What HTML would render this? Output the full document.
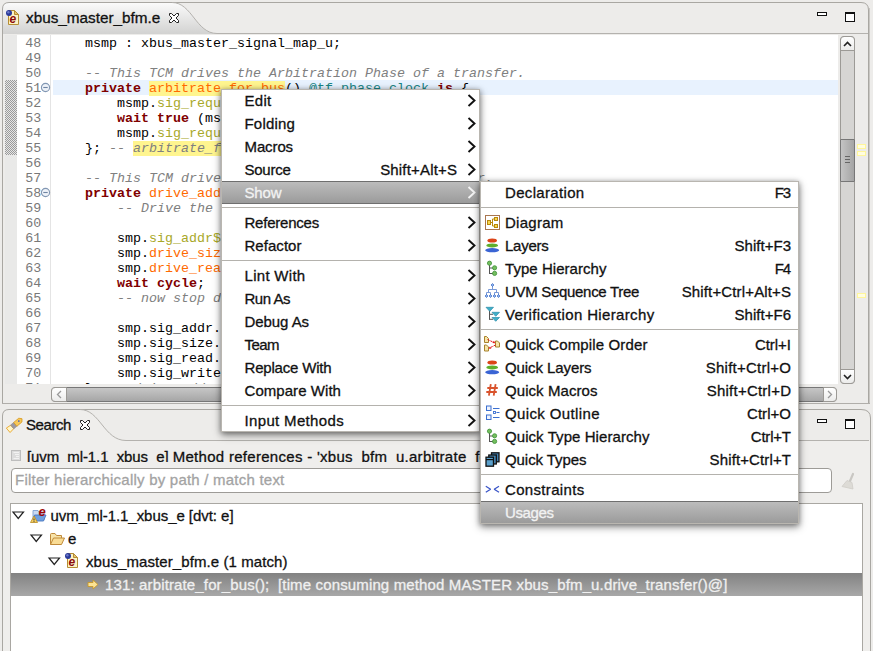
<!DOCTYPE html>
<html>
<head>
<meta charset="utf-8">
<style>
*{box-sizing:border-box;margin:0;padding:0}
html,body{width:873px;height:651px;overflow:hidden;background:#edecea;font-family:"Liberation Sans",sans-serif;}
.abs{position:absolute}
#root{position:relative;width:873px;height:651px;overflow:hidden;background:#edecea}
svg{position:absolute;overflow:visible}
/* editor */
#code{position:absolute;left:17px;top:35px;width:821px;height:349px;background:#fff;overflow:hidden}
.ln{position:absolute;left:36px;height:15px;margin-top:1px;font:13.33px/15px "Liberation Mono",monospace;white-space:pre;color:#000}
.num{position:absolute;left:8.300px;height:15px;margin-top:1px;font:13.33px/15px "Liberation Mono",monospace;color:#787878}
.kw{color:#7f0000;font-weight:bold}
.cm{color:#808080;font-style:italic}
.or{color:#ff6a00}
.ol{color:#a8a828}
.tl{color:#1a8585}
.hl{background:#fff58f}
/* menus */
.menu{position:absolute;background:#fff;border:1px solid #b9b6b0;box-shadow:0 3px 8px 0 rgba(0,0,0,.42),0 1px 5px rgba(0,0,0,.3);overflow:hidden}
.mi{position:absolute;left:0;right:0;height:23px;font-size:15px;line-height:23px;color:#111;white-space:nowrap;-webkit-text-stroke:0.3px}
#m1 .t{position:absolute;left:22.5px;top:0}
#m1 .k{position:absolute;right:22px;top:0}
#m2 .t{position:absolute;left:24px;top:0}
#m2 .k{position:absolute;right:7px;top:0}
.mi svg.a{right:3px;top:5px}
.mi svg.ic{left:4px;top:4px}
.sep{position:absolute;left:0;right:0;height:1px;background:#b4b2ad}
.sel{background:linear-gradient(#bcbcbc,#9b9b9b);border-top:1px solid #6f6f6f;border-bottom:1px solid #6f6f6f;color:#f2f2f2;line-height:21px}
.sel svg.a{margin-top:-1px}
.ui{position:absolute;font-size:15px;line-height:18px;color:#111;white-space:nowrap;-webkit-text-stroke:0.3px}
</style>
</head>
<body>
<div id="root">
<!-- EDITOR PANEL -->
<svg width="873" height="40" style="left:0;top:0">
<defs><linearGradient id="tg" x1="0" y1="0" x2="0" y2="1"><stop offset="0" stop-color="#fbfbfb"/><stop offset="1" stop-color="#d2d2d1"/></linearGradient></defs>
<path d="M2.5,35 L2.5,9 Q2.5,2.5 9,2.5 L172,2.5 C192,2.5 196,33.5 217,33.5 L868.5,33.5 L868.5,35 Z" fill="#edecea"/>
<path d="M2.5,34 L2.5,9 Q2.5,2.5 9,2.5 L172,2.5 C192,2.5 196,33.5 217,33.5 L217,34 Z" fill="url(#tg)"/>
<path d="M2.5,404 L2.5,9 Q2.5,2.5 9,2.5 L861,2.5 Q868.5,2.5 868.5,10 L868.5,404" fill="none" stroke="#a9a7a2" stroke-width="1"/>
<path d="M172,2.5 C192,2.5 196,33.5 217,33.5 L868,33.5" fill="none" stroke="#b4b2ae" stroke-width="1"/>
</svg>
<div class="abs" style="left:2px;top:403px;width:868px;height:1px;background:#b0aeaa"></div>
<div class="abs" style="left:869px;top:8px;width:1px;height:395px;background:#c9c7c3"></div>
<svg width="14" height="18" style="left:6px;top:9px" viewBox="0 0 14 18">
<path d="M2.5,1.5 L8.5,1.5 L12.5,5.5 L12.5,15.5 L2.5,15.5 Z" fill="#fdf3c4" stroke="#b58d35" stroke-width="1"/>
<path d="M8.5,1.5 L8.5,5.5 L12.5,5.5 Z" fill="#e8c36a" stroke="#b58d35" stroke-width="1"/>
<text x="3.6" y="14" font-family="Liberation Sans" font-weight="bold" font-style="italic" font-size="12" fill="#8b0a0a">e</text>
<circle cx="3" cy="4" r="3" fill="#2a3a9a"/><circle cx="2.4" cy="3.3" r="1.2" fill="#6a78c8"/>
</svg>
<div class="ui" style="left:26px;top:9px;font-size:15.3px">xbus_master_bfm.e</div>
<svg width="12" height="12" style="left:168px;top:12px" viewBox="0 0 12 12"><path d="M1.5,1.5 L3.5,1.5 L6,4 L8.5,1.5 L10.5,1.5 L10.5,3.5 L8,6 L10.5,8.5 L10.5,10.5 L8.5,10.5 L6,8 L3.5,10.5 L1.5,10.5 L1.5,8.5 L4,6 L1.5,3.5 Z" fill="#fff" stroke="#222" stroke-width="1"/></svg>
<div class="abs" style="left:817px;top:12px;width:10px;height:4px;border:1px solid #111;background:#fff"></div>
<div class="abs" style="left:845px;top:12px;width:10px;height:10px;border:1px solid #111;border-top-width:2px;background:#fff"></div>
<div class="abs" style="left:5px;top:35px;width:12px;height:349px;background:#e9e9e8"></div>
<div class="abs" style="left:5px;top:80px;width:12px;height:75px;background-color:#d8d8d8;background-image:repeating-conic-gradient(#9a9a9a 0% 25%, #e6e6e6 0% 50%);background-size:2px 2px"></div>
<div id="code">
<div class="abs" style="left:36px;top:45px;width:785px;height:15px;background:#e8f2fe"></div>
<div class="abs" style="left:33px;top:0;width:1px;height:349px;background:#e4e4e4"></div>
<div class="num" style="top:0px">48</div>
<div class="ln" style="top:0px">    msmp : xbus_master_signal_map_u;</div>
<div class="num" style="top:15px">49</div>
<div class="num" style="top:30px">50</div>
<div class="ln" style="top:30px">    <span class="cm">-- This TCM drives the Arbitration Phase of a transfer.</span></div>
<div class="num" style="top:45px">51</div>
<div class="ln" style="top:45px">    <span class="kw">private</span> <span class="or hl">arbitrate_for_bus</span>() <span class="tl">@tf_phase_clock</span> <span class="kw">is</span> {</div>
<div class="num" style="top:60px">52</div>
<div class="ln" style="top:60px">        msmp.<span class="ol">sig_request$</span> = 1;</div>
<div class="num" style="top:75px">53</div>
<div class="ln" style="top:75px">        <span class="kw">wait true</span> (msmp.sig_grant$ == 1);</div>
<div class="num" style="top:90px">54</div>
<div class="ln" style="top:90px">        msmp.<span class="ol">sig_request$</span> = 0;</div>
<div class="num" style="top:105px">55</div>
<div class="ln" style="top:105px">    }; <span class="cm">-- <span class="hl">arbitrate_for_bus</span>()</span></div>
<div class="num" style="top:120px">56</div>
<div class="num" style="top:135px">57</div>
<div class="ln" style="top:135px">    <span class="cm">-- This TCM drives the Address Phase of a transfer.</span></div>
<div class="num" style="top:150px">58</div>
<div class="ln" style="top:150px">    <span class="kw">private</span> <span class="or">drive_address_phase</span>(t : MASTER xbus_trans_s) @tf_phase_clock <span class="kw">is</span> {</div>
<div class="num" style="top:165px">59</div>
<div class="ln" style="top:165px">        <span class="cm">-- Drive the address phase</span></div>
<div class="num" style="top:180px">60</div>
<div class="num" style="top:195px">61</div>
<div class="ln" style="top:195px">        smp.<span class="ol">sig_addr$</span> = t.addr;</div>
<div class="num" style="top:210px">62</div>
<div class="ln" style="top:210px">        smp.<span class="or">drive_size</span>(t.size);</div>
<div class="num" style="top:225px">63</div>
<div class="ln" style="top:225px">        smp.<span class="or">drive_read_write</span>(t.read_write);</div>
<div class="num" style="top:240px">64</div>
<div class="ln" style="top:240px">        <span class="kw">wait cycle</span>;</div>
<div class="num" style="top:255px">65</div>
<div class="ln" style="top:255px">        <span class="cm">-- now stop driving</span></div>
<div class="num" style="top:270px">66</div>
<div class="num" style="top:285px">67</div>
<div class="ln" style="top:285px">        smp.sig_addr.put_mvl_list({MVL_Z});</div>
<div class="num" style="top:300px">68</div>
<div class="ln" style="top:300px">        smp.sig_size.put_mvl_list({MVL_Z});</div>
<div class="num" style="top:315px">69</div>
<div class="ln" style="top:315px">        smp.sig_read.put_mvl(MVL_Z);</div>
<div class="num" style="top:330px">70</div>
<div class="ln" style="top:330px">        smp.sig_write.put_mvl(MVL_Z);</div>
<div class="num" style="top:345px">71</div>
<div class="ln" style="top:345px">    }; <span class="cm">-- drive_address_phase()</span></div>
<svg width="9" height="9" style="left:24px;top:48px" viewBox="0 0 9 9"><circle cx="4.5" cy="4.5" r="4.100" fill="#eef2f8" stroke="#8297b3" stroke-width="1.100"/><path d="M2.300,4.5 H6.700" stroke="#6f85a3" stroke-width="1.100"/></svg>
<svg width="9" height="9" style="left:24px;top:153px" viewBox="0 0 9 9"><circle cx="4.5" cy="4.5" r="4.100" fill="#eef2f8" stroke="#8297b3" stroke-width="1.100"/><path d="M2.300,4.5 H6.700" stroke="#6f85a3" stroke-width="1.100"/></svg>
</div>
<div class="abs" style="left:840px;top:36px;width:15px;height:348px;background:#d6d5d3;border:1px solid #9c9a96;border-radius:4px"></div>
<div class="abs" style="left:840px;top:36px;width:15px;height:15px;background:linear-gradient(#fff,#ececeb);border:1px solid #9c9a96;border-radius:4px 4px 0 0"></div>
<svg width="9" height="6" style="left:843px;top:41px" viewBox="0 0 9 6"><path d="M1,5 L4.5,1.5 L8,5" fill="none" stroke="#222" stroke-width="1.6"/></svg>
<div class="abs" style="left:840px;top:369px;width:15px;height:15px;background:linear-gradient(#fff,#ececeb);border:1px solid #9c9a96;border-radius:0 0 4px 4px"></div>
<svg width="9" height="6" style="left:843px;top:374px" viewBox="0 0 9 6"><path d="M1,1 L4.5,4.5 L8,1" fill="none" stroke="#222" stroke-width="1.6"/></svg>
<div class="abs" style="left:840px;top:139px;width:15px;height:43px;background:linear-gradient(90deg,#c4c4c4,#a4a4a4);border:1px solid #777;border-radius:1px"></div>
<div class="abs" style="left:845px;top:156px;width:5px;height:1px;background:#666"></div>
<div class="abs" style="left:845px;top:159px;width:5px;height:1px;background:#666"></div>
<div class="abs" style="left:845px;top:162px;width:5px;height:1px;background:#666"></div>
<div class="abs" style="left:857px;top:144px;width:9px;height:5px;background:#fffde0;border:1px solid #fff69a"></div>
<div class="abs" style="left:857px;top:151px;width:9px;height:5px;background:#fffde0;border:1px solid #fff69a"></div>
<div class="abs" style="left:857px;top:293px;width:9px;height:5px;background:#fffde0;border:1px solid #fff69a"></div>
<div class="abs" style="left:51px;top:387px;width:786px;height:15px;background:#d6d5d3;border:1px solid #9c9a96;border-radius:4px"></div>
<div class="abs" style="left:66px;top:387px;width:758px;height:15px;background:linear-gradient(#c6c6c6,#a6a6a6);border:1px solid #777"></div>
<div class="abs" style="left:51px;top:387px;width:16px;height:15px;background:linear-gradient(#fff,#ececeb);border:1px solid #9c9a96;border-radius:4px 0 0 4px"></div>
<svg width="6" height="9" style="left:56px;top:390px" viewBox="0 0 6 9"><path d="M5,1 L1.5,4.5 L5,8" fill="none" stroke="#999" stroke-width="1.3"/></svg>
<div class="abs" style="left:823px;top:387px;width:14px;height:15px;background:linear-gradient(#fff,#ececeb);border:1px solid #9c9a96;border-radius:0 4px 4px 0"></div>
<svg width="6" height="9" style="left:827px;top:390px" viewBox="0 0 6 9"><path d="M1,1 L4.5,4.5 L1,8" fill="none" stroke="#999" stroke-width="1.3"/></svg>
<!-- SEARCH PANEL -->
<svg width="873" height="245" style="left:0;top:406px">
<path d="M2.5,245 L2.5,10 Q2.5,3.500 9,3.500 L80,3.500 C100,3.500 104,34.500 126,34.500 L870.500,34.500 L870.500,245 Z" fill="#efeeec"/>
<path d="M2.5,245 L2.5,10 Q2.5,3.500 9,3.500 L861,3.500 Q870.500,3.500 870.500,12 L870.500,245" fill="none" stroke="#a9a7a2" stroke-width="1"/>
<path d="M80,3.500 C100,3.500 104,34.500 126,34.500 L869,34.500" fill="none" stroke="#b4b2ae" stroke-width="1"/>
</svg>
<svg width="18" height="16" style="left:5px;top:417px" viewBox="0 0 18 16">
<g transform="translate(3.200,13.300) rotate(-40) scale(.88)">
<path d="M0,-3.300 L6,-2.600 L6,2.600 L0,3.300 Z" fill="#fff6c8" stroke="#e8a020" stroke-width=".9"/>
<rect x="6" y="-2.800" width="4.500" height="5.600" fill="#9b99a3" stroke="#85838d" stroke-width=".6"/>
<path d="M10.500,-2.800 H18 L20.500,0 L18,2.800 H10.500 Z" fill="#f6c85a" stroke="#d89a20" stroke-width=".9"/>
<circle cx="16" cy="-0.300" r=".9" fill="#3050c0"/>
</g>
</svg>
<div class="ui" style="left:26px;top:416px;letter-spacing:-0.421px">Search</div>
<svg width="12" height="12" style="left:79px;top:419px" viewBox="0 0 12 12"><path d="M1.5,1.5 L3.5,1.5 L6,4 L8.5,1.5 L10.5,1.5 L10.5,3.5 L8,6 L10.5,8.5 L10.5,10.5 L8.5,10.5 L6,8 L3.5,10.5 L1.5,10.5 L1.5,8.5 L4,6 L1.5,3.5 Z" fill="#fff" stroke="#222" stroke-width="1"/></svg>
<div class="abs" style="left:817px;top:419px;width:10px;height:4px;border:1px solid #111;background:#fff"></div>
<div class="abs" style="left:845px;top:419px;width:10px;height:10px;border:1px solid #111;border-top-width:2px;background:#fff"></div>
<svg width="10" height="11" style="left:11px;top:450px" viewBox="0 0 10 11"><rect x=".5" y=".5" width="9" height="10" fill="#dcdcdc" stroke="#bdbdbd"/><path d="M2.500,2.500 H8 M4,4.500 H8 M5,6.500 H8 M2.500,8.500 H8" stroke="#f2f2f2"/></svg>
<div class="ui" style="left:27px;top:447.5px;height:14.500px;width:780px;overflow:hidden;font-size:15px"><span style="letter-spacing:-0.1px">[uvm_ml-1.1_xbus_e]</span> <span style="letter-spacing:.29px">Method references - </span><span style="letter-spacing:.28px">&#39;xbus_bfm_u.arbitrate_for_bus&#39; - 1 match in working set</span></div>
<div class="abs" style="left:11px;top:468px;width:821px;height:25px;background:#fff;border:1px solid #9d9b97;border-radius:4px"></div>
<div class="ui" style="left:15px;top:471px;color:#a3a3a3;letter-spacing:0.224px">Filter hierarchically by path / match text</div>
<svg width="16" height="18" style="left:841px;top:473px" viewBox="0 0 16 18"><path d="M12,1 L9,8" stroke="#c9c7c3" stroke-width="2.2" stroke-linecap="round"/><path d="M6,7.500 L11,9.500 L12,16 L1,13.500 Z" fill="#dddbd6" stroke="#cfcdc8" stroke-width=".8"/></svg>
<div class="abs" style="left:10px;top:503px;width:853px;height:160px;background:#fff;border:1px solid #a9a7a2"></div>
<div class="abs" style="left:11px;top:573px;width:851px;height:23px;background:linear-gradient(#828282,#a8a8a8)"></div>
<svg width="13" height="9" style="left:12px;top:511px" viewBox="0 0 13 9"><path d="M1,1 H11.500 L6.250,7.500 Z" fill="#fff" stroke="#222" stroke-width="1.2" stroke-linejoin="miter"/></svg>
<svg width="13" height="9" style="left:30px;top:534px" viewBox="0 0 13 9"><path d="M1,1 H11.500 L6.250,7.500 Z" fill="#fff" stroke="#222" stroke-width="1.2" stroke-linejoin="miter"/></svg>
<svg width="13" height="9" style="left:48px;top:557px" viewBox="0 0 13 9"><path d="M1,1 H11.500 L6.250,7.500 Z" fill="#fff" stroke="#222" stroke-width="1.2" stroke-linejoin="miter"/></svg>
<svg width="18" height="18" style="left:30px;top:506px" viewBox="0 0 18 18">
<path d="M3,4.500 H8 L9,6 H14 V14 H3 Z" fill="#c9daf2" stroke="#7f9fd0" stroke-width=".9"/>
<path d="M4.500,9 H16 L13.500,15 H3 Z" fill="#6f9fe0" stroke="#4a78c0" stroke-width=".9"/>
<text x="8.5" y="9.500" font-family="Liberation Sans" font-weight="bold" font-style="italic" font-size="13" fill="#a00808">e</text>
<path d="M4,10 L7.500,16.500 H0.500 Z" fill="#f8d060" stroke="#b88a20" stroke-width=".8"/><path d="M4,12.500 V14.500" stroke="#333" stroke-width="1"/><rect x="3.500" y="15" width="1" height=".8" fill="#333"/>
</svg>
<div class="ui" style="left:50.5px;top:507px;letter-spacing:-0.048px">uvm_ml-1.1_xbus_e [dvt: e]</div>
<svg width="17" height="14" style="left:49px;top:532px" viewBox="0 0 17 14">
<path d="M1.500,12.500 V2.500 Q1.500,1.500 2.500,1.500 H6 L7.500,3.500 H12.500 V6" fill="#f7e3a8" stroke="#c08a3a" stroke-width="1"/>
<path d="M1.500,12.500 L4.500,6 H15.500 L12.500,12.500 Z" fill="#f9dc95" stroke="#c08a3a" stroke-width="1"/>
</svg>
<div class="ui" style="left:68px;top:530px">e</div>
<svg width="14" height="18" style="left:65px;top:552px" viewBox="0 0 14 18">
<path d="M2.5,1.5 L8.5,1.5 L12.5,5.5 L12.5,15.5 L2.5,15.5 Z" fill="#fdf3c4" stroke="#b58d35" stroke-width="1"/>
<path d="M8.5,1.5 L8.5,5.5 L12.5,5.5 Z" fill="#e8c36a" stroke="#b58d35" stroke-width="1"/>
<text x="3.6" y="14" font-family="Liberation Sans" font-weight="bold" font-style="italic" font-size="12" fill="#8b0a0a">e</text>
<circle cx="3" cy="4" r="3" fill="#2a3a9a"/><circle cx="2.4" cy="3.3" r="1.2" fill="#6a78c8"/>
</svg>
<div class="ui" style="left:86px;top:553px;letter-spacing:0.084px">xbus_master_bfm.e (1 match)</div>
<svg width="12" height="11" style="left:87px;top:579px" viewBox="0 0 12 11"><path d="M1,3.500 H6 V1 L11,5.500 L6,10 V7.500 H1 Z" fill="#fbe394" stroke="#c8982a" stroke-width=".9"/></svg>
<div class="ui" style="left:105px;top:576px;color:#f0f0f0;white-space:pre;letter-spacing:0.140px">131: arbitrate_for_bus();  [time consuming method MASTER xbus_bfm_u.drive_transfer()@]</div>
<div class="menu" id="m1" style="left:221px;top:89px;width:259px;height:343px">
<div class="mi" style="top:-1px"><span class="t" style="letter-spacing:0.288px">Edit</span><svg class="a" width="9" height="13" viewBox="0 0 9 13"><path d="M1.5,1 L7.5,6.5 L1.5,12" fill="none" stroke="#111" stroke-width="1.9"/></svg></div>
<div class="mi" style="top:22px"><span class="t" style="letter-spacing:0.186px">Folding</span><svg class="a" width="9" height="13" viewBox="0 0 9 13"><path d="M1.5,1 L7.5,6.5 L1.5,12" fill="none" stroke="#111" stroke-width="1.9"/></svg></div>
<div class="mi" style="top:45px"><span class="t" style="letter-spacing:-0.112px">Macros</span><svg class="a" width="9" height="13" viewBox="0 0 9 13"><path d="M1.5,1 L7.5,6.5 L1.5,12" fill="none" stroke="#111" stroke-width="1.9"/></svg></div>
<div class="mi" style="top:68px"><span class="t" style="letter-spacing:-0.254px">Source</span><span class="k" style="letter-spacing:0.178px;margin-right:-0.178px">Shift+Alt+S</span><svg class="a" width="9" height="13" viewBox="0 0 9 13"><path d="M1.5,1 L7.5,6.5 L1.5,12" fill="none" stroke="#111" stroke-width="1.9"/></svg></div>
<div class="mi sel" style="top:91px"><span class="t" style="letter-spacing:-0.130px">Show</span><svg class="a" width="9" height="13" viewBox="0 0 9 13"><path d="M1.5,1 L7.5,6.5 L1.5,12" fill="none" stroke="#f4f4f4" stroke-width="1.9"/></svg></div>
<div class="sep" style="top:117px"></div>
<div class="mi" style="top:121px"><span class="t" style="letter-spacing:-0.221px">References</span><svg class="a" width="9" height="13" viewBox="0 0 9 13"><path d="M1.5,1 L7.5,6.5 L1.5,12" fill="none" stroke="#111" stroke-width="1.9"/></svg></div>
<div class="mi" style="top:144px"><span class="t" style="letter-spacing:0.039px">Refactor</span><svg class="a" width="9" height="13" viewBox="0 0 9 13"><path d="M1.5,1 L7.5,6.5 L1.5,12" fill="none" stroke="#111" stroke-width="1.9"/></svg></div>
<div class="sep" style="top:170px"></div>
<div class="mi" style="top:174px"><span class="t" style="letter-spacing:0.294px">Lint With</span><svg class="a" width="9" height="13" viewBox="0 0 9 13"><path d="M1.5,1 L7.5,6.5 L1.5,12" fill="none" stroke="#111" stroke-width="1.9"/></svg></div>
<div class="mi" style="top:197px"><span class="t" style="letter-spacing:-0.477px">Run As</span><svg class="a" width="9" height="13" viewBox="0 0 9 13"><path d="M1.5,1 L7.5,6.5 L1.5,12" fill="none" stroke="#111" stroke-width="1.9"/></svg></div>
<div class="mi" style="top:220px"><span class="t" style="letter-spacing:-0.068px">Debug As</span><svg class="a" width="9" height="13" viewBox="0 0 9 13"><path d="M1.5,1 L7.5,6.5 L1.5,12" fill="none" stroke="#111" stroke-width="1.9"/></svg></div>
<div class="mi" style="top:243px"><span class="t" style="letter-spacing:-0.545px">Team</span><svg class="a" width="9" height="13" viewBox="0 0 9 13"><path d="M1.5,1 L7.5,6.5 L1.5,12" fill="none" stroke="#111" stroke-width="1.9"/></svg></div>
<div class="mi" style="top:266px"><span class="t" style="letter-spacing:-0.183px">Replace With</span><svg class="a" width="9" height="13" viewBox="0 0 9 13"><path d="M1.5,1 L7.5,6.5 L1.5,12" fill="none" stroke="#111" stroke-width="1.9"/></svg></div>
<div class="mi" style="top:289px"><span class="t" style="letter-spacing:0.053px">Compare With</span><svg class="a" width="9" height="13" viewBox="0 0 9 13"><path d="M1.5,1 L7.5,6.5 L1.5,12" fill="none" stroke="#111" stroke-width="1.9"/></svg></div>
<div class="sep" style="top:315px"></div>
<div class="mi" style="top:319px"><span class="t" style="letter-spacing:0.342px">Input Methods</span><svg class="a" width="9" height="13" viewBox="0 0 9 13"><path d="M1.5,1 L7.5,6.5 L1.5,12" fill="none" stroke="#111" stroke-width="1.9"/></svg></div>
</div>
<div class="menu" id="m2" style="left:480px;top:181px;width:319px;height:343px">
<div class="mi" style="top:-1px"><span class="t" style="letter-spacing:0.330px">Declaration</span><span class="k" style="letter-spacing:-1.252px;margin-right:1.252px">F3</span></div>
<div class="sep" style="top:25px"></div>
<div class="mi" style="top:29px"><svg class="ic" width="16" height="16" viewBox="0 0 16 16"><rect x="0.5" y="0.5" width="14" height="14" fill="#fff" stroke="#a9764f"/><rect x="2.5" y="5.5" width="3" height="4" fill="#f8d84a" stroke="#b8860b"/><rect x="9.5" y="2.5" width="3" height="3" fill="#f8d84a" stroke="#b8860b"/><rect x="9.5" y="9.5" width="3" height="3" fill="#f8d84a" stroke="#b8860b"/><path d="M5.5,7.5 H7.5 M7.5,4 V11 M7.5,4 H9.5 M7.5,11 H9.5" stroke="#b8860b" fill="none"/></svg><span class="t" style="letter-spacing:0.260px">Diagram</span></div>
<div class="mi" style="top:52px"><svg class="ic" width="16" height="16" viewBox="0 0 16 16"><ellipse cx="7.2" cy="2.6" rx="4.8" ry="2" fill="#dc4418"/><ellipse cx="7.2" cy="7.4" rx="5.9" ry="2" fill="#5fae2c"/><ellipse cx="7.2" cy="12.2" rx="7" ry="2.1" fill="#3a64d4"/></svg><span class="t" style="letter-spacing:-0.254px">Layers</span><span class="k" style="letter-spacing:0.028px;margin-right:-0.028px">Shift+F3</span></div>
<div class="mi" style="top:75px"><svg class="ic" width="16" height="16" viewBox="0 0 16 16"><path d="M4.5,2.5 V13 M4.5,7 H8 M4.5,12.500 H8" stroke="#555" fill="none"/><circle cx="4.5" cy="2.2" r="2.1" fill="#74bf5e" stroke="#3f8f38" stroke-width=".8"/><circle cx="9.6" cy="6.800" r="2.1" fill="#74bf5e" stroke="#3f8f38" stroke-width=".8"/><circle cx="9.6" cy="12.400" r="2.1" fill="#74bf5e" stroke="#3f8f38" stroke-width=".8"/></svg><span class="t" style="letter-spacing:0.045px">Type Hierarchy</span><span class="k" style="letter-spacing:-1.252px;margin-right:1.252px">F4</span></div>
<div class="mi" style="top:98px"><svg class="ic" width="16" height="16" viewBox="0 1 16 16"><path d="M7.5,3 V6.5 M3.5,6.5 H11.5 M3.5,6.5 V9.500 M11.5,6.5 V9.500 M1.5,9.500 H5.5 M9.5,9.500 H13.5 M1.5,9.500 V12.500 M5.5,9.500 V12.500 M9.5,9.500 V12.500 M13.5,9.500 V12.500" stroke="#7a9ad8" fill="none"/><path d="M7.5,0.5 L9,2 L7.5,3.5 L6,2 Z M1.5,11.500 L3,13 L1.5,14.500 L0,13 Z M5.5,11.500 L7,13 L5.5,14.500 L4,13 Z M9.5,11.500 L11,13 L9.5,14.500 L8,13 Z M13.5,11.500 L15,13 L13.5,14.500 L12,13 Z" fill="#8ab0f0" stroke="#3a68c0" stroke-width=".7"/></svg><span class="t" style="letter-spacing:-0.308px">UVM Sequence Tree</span><span class="k" style="letter-spacing:0.148px;margin-right:-0.148px">Shift+Ctrl+Alt+S</span></div>
<div class="mi" style="top:121px"><svg class="ic" width="16" height="16" viewBox="0 0.700 16 16"><path d="M4.5,4 V13.5 M4.5,8 H8 M4.5,13 H8" stroke="#555" fill="none"/><path d="M1,1 H8.5 L4.75,5 Z" fill="#3fb0c8" stroke="#2a8aa8" stroke-width=".7"/><path d="M7,6 H14.5 L10.75,10 Z" fill="#3fb0c8" stroke="#2a8aa8" stroke-width=".7"/><path d="M7,11.2 H14.5 L10.75,15 Z" fill="#3fb0c8" stroke="#2a8aa8" stroke-width=".7"/></svg><span class="t" style="letter-spacing:0.353px">Verification Hierarchy</span><span class="k" style="letter-spacing:0.028px;margin-right:-0.028px">Shift+F6</span></div>
<div class="sep" style="top:147px"></div>
<div class="mi" style="top:151px"><svg class="ic" width="17" height="16" viewBox="1 1 17 16"><g fill="#f6e6a8" stroke="#a8822c" stroke-width="1"><path d="M0.5,0.5 H2.500 L4.500,2.500 V6.500 H0.5 Z"/><path d="M0.5,9 H2.500 L4.500,11 V15 H0.5 Z"/><path d="M11.5,5 H13.500 L15.500,7 V11 H11.5 Z"/></g><path d="M3.500,3.500 L10,6.5 M11.5,9 L5.500,12" stroke="#e81818" stroke-width="1" fill="none" stroke-dasharray="2.200 1"/><path d="M11.300,7.300 L8.300,7 L10,4.700 Z M4.500,12.600 L7.400,12.800 L6,10.400 Z" fill="#e81818"/></svg><span class="t" style="letter-spacing:0.130px">Quick Compile Order</span><span class="k" style="letter-spacing:-0.042px;margin-right:0.042px">Ctrl+I</span></div>
<div class="mi" style="top:174px"><svg class="ic" width="16" height="16" viewBox="0 0 16 16"><ellipse cx="7.2" cy="2.6" rx="4.8" ry="2" fill="#dc4418"/><ellipse cx="7.2" cy="7.4" rx="5.9" ry="2" fill="#5fae2c"/><ellipse cx="7.2" cy="12.2" rx="7" ry="2.1" fill="#3a64d4"/></svg><span class="t" style="letter-spacing:-0.086px">Quick Layers</span><span class="k" style="letter-spacing:0.248px;margin-right:-0.248px">Shift+Ctrl+O</span></div>
<div class="mi" style="top:197px"><svg class="ic" width="16" height="16" viewBox="0 0 16 16"><path d="M5.800,1.200 L3.900,12.600 M10.600,1.200 L8.700,12.600 M2.300,5 H12.800 M1.300,9 H11.800" stroke="#d9532c" stroke-width="1.800" fill="none"/></svg><span class="t" style="letter-spacing:0.068px">Quick Macros</span><span class="k" style="letter-spacing:0.234px;margin-right:-0.234px">Shift+Ctrl+D</span></div>
<div class="mi" style="top:220px"><svg class="ic" width="16" height="16" viewBox="0 0.500 16 16"><rect x="1.500" y="0.500" width="4.500" height="4.500" fill="#eef3fd" stroke="#3b6fd0"/><rect x="1.500" y="9.500" width="4.500" height="4.500" fill="#eef3fd" stroke="#3b6fd0"/><rect x="8.500" y="6" width="2" height="2" fill="#fff" stroke="#3b6fd0" stroke-width=".9"/><path d="M8,3 H14.500 M11.500,7 H14.500 M8,12 H14.500" stroke="#3b6fd0" stroke-width="1.100"/></svg><span class="t" style="letter-spacing:0.382px">Quick Outline</span><span class="k" style="letter-spacing:0.041px;margin-right:-0.041px">Ctrl+O</span></div>
<div class="mi" style="top:243px"><svg class="ic" width="16" height="16" viewBox="0 0 16 16"><path d="M4.5,2.5 V13 M4.5,7 H8 M4.5,12.500 H8" stroke="#555" fill="none"/><circle cx="4.5" cy="2.2" r="2.1" fill="#74bf5e" stroke="#3f8f38" stroke-width=".8"/><circle cx="9.6" cy="6.800" r="2.1" fill="#74bf5e" stroke="#3f8f38" stroke-width=".8"/><circle cx="9.6" cy="12.400" r="2.1" fill="#74bf5e" stroke="#3f8f38" stroke-width=".8"/></svg><span class="t" style="letter-spacing:0.070px">Quick Type Hierarchy</span><span class="k" style="letter-spacing:-0.208px;margin-right:0.208px">Ctrl+T</span></div>
<div class="mi" style="top:266px"><svg class="ic" width="16" height="16" viewBox="0 0 16 16"><g stroke="#111" stroke-width="1.3"><rect x="6.5" y="0.8" width="7.5" height="9" fill="#3f7fb0"/><rect x="3.8" y="3" width="7.5" height="9" fill="#4a8fc0"/><rect x="1" y="5.200" width="7.5" height="9" fill="#5aa0cc"/></g><path d="M1,7.6 H8.5" stroke="#111" stroke-width="1.2"/></svg><span class="t" style="letter-spacing:-0.069px">Quick Types</span><span class="k" style="letter-spacing:0.123px;margin-right:-0.123px">Shift+Ctrl+T</span></div>
<div class="sep" style="top:292px"></div>
<div class="mi" style="top:296px"><svg class="ic" width="16" height="16" viewBox="0 0 16 16"><path d="M0.800,4.300 L5.600,7.300 L0.800,10.300 M14,4.300 L9.200,7.300 L14,10.300" stroke="#3a55c8" stroke-width="1.300" fill="none" stroke-linejoin="bevel"/></svg><span class="t" style="letter-spacing:0.331px">Constraints</span></div>
<div class="mi sel" style="top:319px"><span class="t" style="letter-spacing:-0.393px">Usages</span></div>
</div>

</div>
</body>
</html>
